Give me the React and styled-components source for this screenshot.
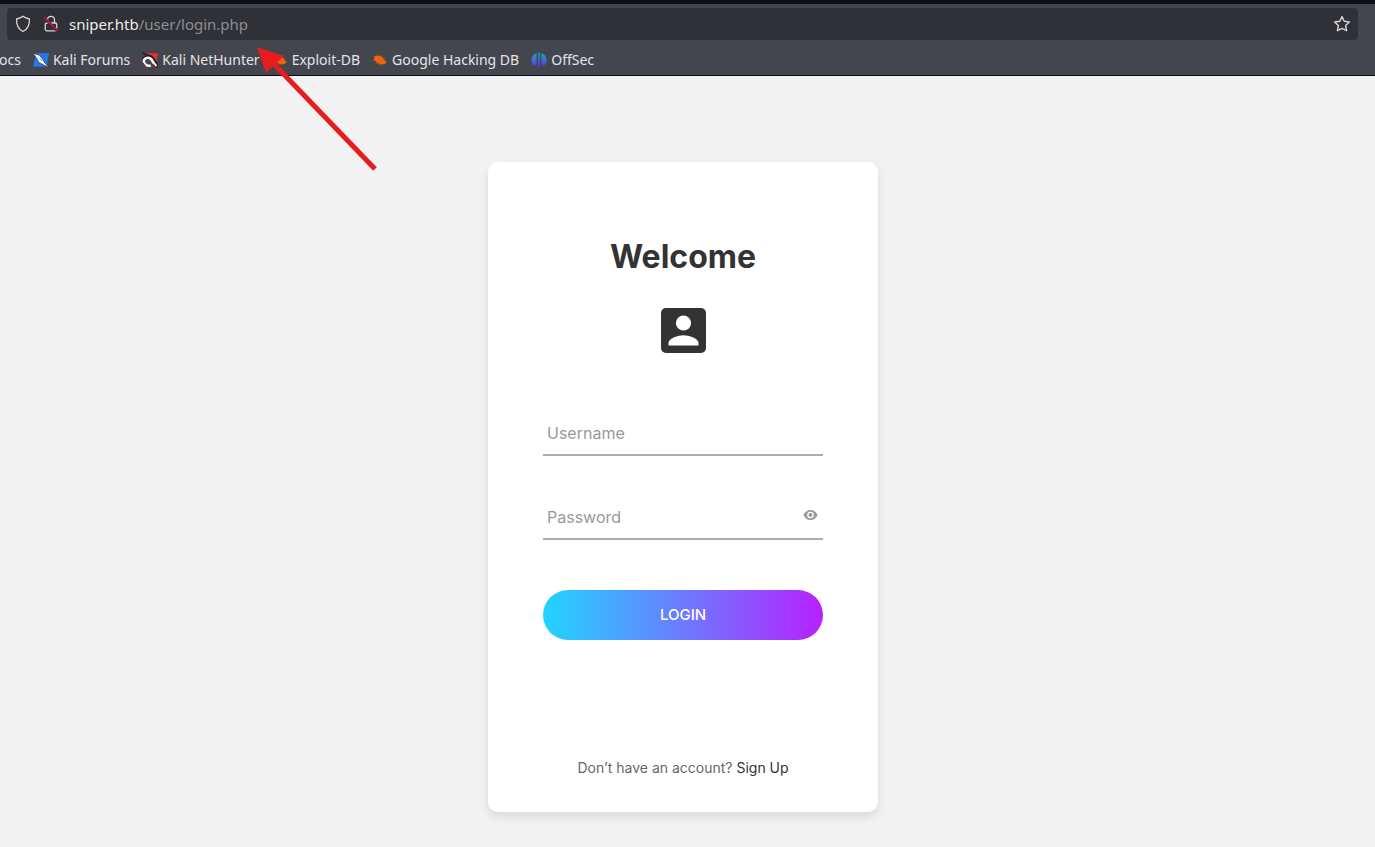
import React, { useState } from "react";
import styled, { createGlobalStyle } from "styled-components";

const GlobalStyle = createGlobalStyle`
  *, *::before, *::after { box-sizing: border-box; }
  body { margin: 0; background: #f2f2f2; font-family: Inter, "Liberation Sans", sans-serif; }
`;

const Window = styled.div`
  position: relative;
  min-height: 100vh;
  display: flex;
  flex-direction: column;
  overflow: hidden;
`;

const Chrome = styled.header`
  border-top: 4px solid #0f1014;
  border-bottom: 1px solid #0c0713;
  background: #44464e;
  padding: 4px 17px 0 0;
  color: #e4e4e7;
  font-family: "Noto Sans", sans-serif;
`;

const AddressBar = styled.div`
  display: flex;
  align-items: center;
  gap: 12px;
  height: 32px;
  margin-left: 7px;
  padding: 0 7px 0 8px;
  border-radius: 4px;
  background: #303136;
`;

const Address = styled.a`
  flex: 1;
  margin-left: -2px;
  color: #8d8e92;
  font-size: 15px;
  line-height: 20px;
  text-decoration: none;
`;

const Host = styled.span`
  color: #ececee;
`;

const IconButton = styled.button`
  display: flex;
  padding: 0;
  border: 0;
  background: none;
  color: ${(p) => p.$color || "#d6d6d9"};
  cursor: pointer;
`;

const Bookmarks = styled.nav`
  display: flex;
  align-items: center;
  gap: 12px;
  height: 35px;
  margin-left: -1px;
  padding-top: 4px;
`;

const Bookmark = styled.a`
  display: flex;
  align-items: center;
  gap: 4px;
  color: inherit;
  font-size: 14px;
  line-height: 20px;
  text-decoration: none;
  white-space: nowrap;
`;

const Page = styled.main`
  flex: 1;
  display: flex;
  justify-content: center;
  align-items: flex-start;
  padding: 86px 9px 35px 0;
`;

const Card = styled.form`
  display: flex;
  flex-direction: column;
  width: 100%;
  max-width: 390px;
  padding: 77px 55px 33px;
  border-radius: 10px;
  background: #fff;
  box-shadow: 0 5px 10px rgba(0, 0, 0, 0.1);
`;

const Title = styled.h1`
  margin: 0;
  color: #333;
  font-size: 32px;
  font-weight: 700;
  line-height: 36px;
  text-align: center;
`;

const Avatar = styled.div`
  display: flex;
  justify-content: center;
  padding: 33px 0 57px;
  color: #333;
`;

const Field = styled.label`
  display: flex;
  align-items: center;
  height: 46px;
  margin-bottom: 38px;
  border-bottom: 2px solid #adadad;
`;

const Input = styled.input`
  flex: 1;
  min-width: 0;
  height: 44px;
  padding: 2px 4px 0;
  border: 0;
  outline: 0;
  background: transparent;
  color: #555;
  font: 400 16px/20px Inter, "Liberation Sans", sans-serif;

  &::placeholder { color: #999; opacity: 1; }
`;

const RevealButton = styled(IconButton)`
  padding: 0 5px 3px;
`;

const LoginButton = styled.button`
  height: 50px;
  margin-top: 12px;
  border: 0;
  border-radius: 25px;
  background: linear-gradient(to right, #21d4fd, #b721ff);
  color: #fff;
  font: 500 15px/20px Inter, "Liberation Sans", sans-serif;
  cursor: pointer;
`;

const SignUp = styled.p`
  margin: 0;
  padding-top: 117px;
  color: #666;
  font-size: 14px;
  line-height: 22px;
  text-align: center;
  white-space: nowrap;
`;

const SignUpLink = styled.a`
  color: #333;
  text-decoration: none;
`;

const Pointer = styled.svg`
  position: absolute;
  top: 44px;
  left: 254px;
  pointer-events: none;
`;

const ShieldIcon = () => (
  <svg width="16" height="18" viewBox="0 0 16 18" fill="none" stroke="#d6d6d9" strokeWidth="1.3" strokeLinejoin="round">
    <path d="M8 1.2 Q10.5 3.2 14.4 4C14.8 9.5 12.8 14 8 16.5 3.2 14 1.2 9.5 1.6 4Q5.5 3.2 8 1.2Z" />
  </svg>
);

const InsecureIcon = () => (
  <svg width="16" height="18" viewBox="0 0 16 18" fill="none">
    <path d="M4.5 8V4.8a3.5 3.5 0 0 1 7 0V8M3.8 8h8.4a1.5 1.5 0 0 1 1.5 1.5v4.8a1.5 1.5 0 0 1-1.5 1.5H3.8a1.5 1.5 0 0 1-1.5-1.5V9.5A1.5 1.5 0 0 1 3.8 8Z" stroke="#d6d6d9" strokeWidth="1.3" />
    <path d="m1.6 3.2 12.6 12.6" stroke="#303136" strokeWidth="3" />
    <path d="m1 2.2 13.6 13.6" stroke="#e20c43" strokeWidth="1.5" />
  </svg>
);

const StarIcon = () => (
  <svg width="18" height="18" viewBox="0 0 18 18" fill="none" stroke="currentColor" strokeWidth="1.4" strokeLinejoin="round">
    <path d="m9 1.6 2.2 4.7 5.2.7-3.8 3.5 1 5.2L9 13.4l-4.6 2.3 1-5.2L1.6 7l5.2-.7Z" />
  </svg>
);

const ForumsIcon = () => (
  <svg width="16" height="16" viewBox="0 0 16 16">
    <path d="M3 1.2h13l-2.4 13.2H.2Z" fill="#2478f3" />
    <path d="M0 1.2 6.5 3.2 10 7.5l1.5 3L16 15.5 9.8 12.6 5.8 10.5 3.8 6.4Z" fill="#f4f4f4" stroke="#202126" strokeWidth=".6" />
    <path d="m6.5 6 2.8 3" stroke="#777" strokeWidth=".8" />
  </svg>
);

const NetHunterIcon = () => (
  <svg width="16" height="16" viewBox="0 0 16 16">
    <path d="M4 1.2h12l-2.5 11.5L9 7Z" fill="#f42b31" />
    <path d="m.5 1 4 1.5L10 4.5" fill="none" stroke="#202126" strokeWidth="1.4" />
    <path d="M1.4 10.5C.5 6.5 4 4 7.5 4.6 11 5 12 8 13 11l2.5 4" fill="none" stroke="#202126" strokeWidth="3.4" />
    <path d="M8.8 13.4C5.2 14.8 1.8 12.2 1.8 9.3 1.8 6.3 5.6 4.8 8.2 6.4c2.6 1.5 2.4 4.5 6.2 7.8" fill="none" stroke="#f6f6f6" strokeWidth="2.6" />
    <path d="m1 11 2.4 3.6M10.5 12.2l3 2.8" stroke="#b10d35" strokeWidth="1.3" />
  </svg>
);

const BugIcon = () => (
  <svg width="16" height="16" viewBox="0 0 16 16" fill="#ef6210">
    <path d="M2 5.4C4 3 8 3.3 10.6 5.5c1 .8 1.5 1.8 1.8 2.7l1.9 1.7-.5 1.7-2 .5c-2.4.9-5 .1-7-1.5C3 9.2 1.8 7.4 2 5.4Z" />
    <path d="m4 4.8-2.7-.6M3.2 8 1 8.6M5.4 10.6l-1.7 1.1M8.2 11.5l-1 1.6M7.5 4 6 2.5M10 5.2l-.2-1.7M12 7.4l2-.8M13 9.6h2" fill="none" stroke="#c9651f" strokeWidth=".7" />
  </svg>
);

const OffSecIcon = () => (
  <svg width="16" height="16" viewBox="0 0 16 16">
    <defs>
      <linearGradient id="offsec" x1="0" y1="0" x2="0" y2="1">
        <stop offset="0" stopColor="#08aebb" />
        <stop offset=".5" stopColor="#3e6ed4" />
        <stop offset="1" stopColor="#6a22dc" />
      </linearGradient>
    </defs>
    <path d="M5.6 1v10.4L3.4 14.2C-1 11.5-1 3.5 5.6 1ZM10.4 1v10.4l2.2 2.8C17 11.5 17 3.5 10.4 1ZM7.2.5h1.6V16H7.2Z" fill="url(#offsec)" />
  </svg>
);

const AccountIcon = () => (
  <svg width="45" height="45" viewBox="0 0 45 45">
    <rect width="45" height="45" rx="5" fill="currentColor" />
    <circle cx="22.5" cy="15" r="7.6" fill="#fff" />
    <path d="M7.5 37.5V35c0-5 10-7.8 15-7.8s15 2.8 15 7.8v2.5Z" fill="#fff" />
  </svg>
);

const EyeIcon = () => (
  <svg width="15" height="12" viewBox="0 0 15 12">
    <path d="M7.5 1C4.3 1 1.6 3 .5 6c1.1 3 3.8 5 7 5s5.9-2 7-5c-1.1-3-3.8-5-7-5Z" fill="currentColor" />
    <circle cx="7.5" cy="6" r="3.3" fill="#fff" />
    <circle cx="7.5" cy="6" r="2" fill="currentColor" />
  </svg>
);

const bookmarks = [
  { label: "ocs" },
  { label: "Kali Forums", Icon: ForumsIcon },
  { label: "Kali NetHunter", Icon: NetHunterIcon },
  { label: "Exploit-DB", Icon: BugIcon },
  { label: "Google Hacking DB", Icon: BugIcon },
  { label: "OffSec", Icon: OffSecIcon },
];

export default function App() {
  const [revealed, setRevealed] = useState(false);

  return (
    <Window>
      <GlobalStyle />
      <Chrome>
        <AddressBar>
          <ShieldIcon />
          <InsecureIcon />
          <Address href="#"><Host>sniper.htb</Host>/user/login.php</Address>
          <IconButton type="button" aria-label="Bookmark this page"><StarIcon /></IconButton>
        </AddressBar>
        <Bookmarks>
          {bookmarks.map(({ label, Icon }) => (
            <Bookmark href="#" key={label}>
              {Icon && <Icon />}
              {label}
            </Bookmark>
          ))}
        </Bookmarks>
      </Chrome>

      <Page>
        <Card onSubmit={(e) => e.preventDefault()}>
          <Title>Welcome</Title>
          <Avatar><AccountIcon /></Avatar>
          <Field>
            <Input type="text" name="username" placeholder="Username" aria-label="Username" />
          </Field>
          <Field>
            <Input type={revealed ? "text" : "password"} name="password" placeholder="Password" aria-label="Password" />
            <RevealButton type="button" $color="#999" aria-label="Show password" onClick={() => setRevealed(!revealed)}>
              <EyeIcon />
            </RevealButton>
          </Field>
          <LoginButton type="submit">LOGIN</LoginButton>
          <SignUp>Don’t have an account? <SignUpLink href="#">Sign Up</SignUpLink></SignUp>
        </Card>
      </Page>

      <Pointer width="126" height="130" viewBox="0 0 126 130" aria-hidden="true">
        <path d="m18 18 103 107" stroke="#e71c1c" strokeWidth="5" />
        <path d="m3 3 27 9-18 17Z" fill="#e71c1c" />
      </Pointer>
    </Window>
  );
}
